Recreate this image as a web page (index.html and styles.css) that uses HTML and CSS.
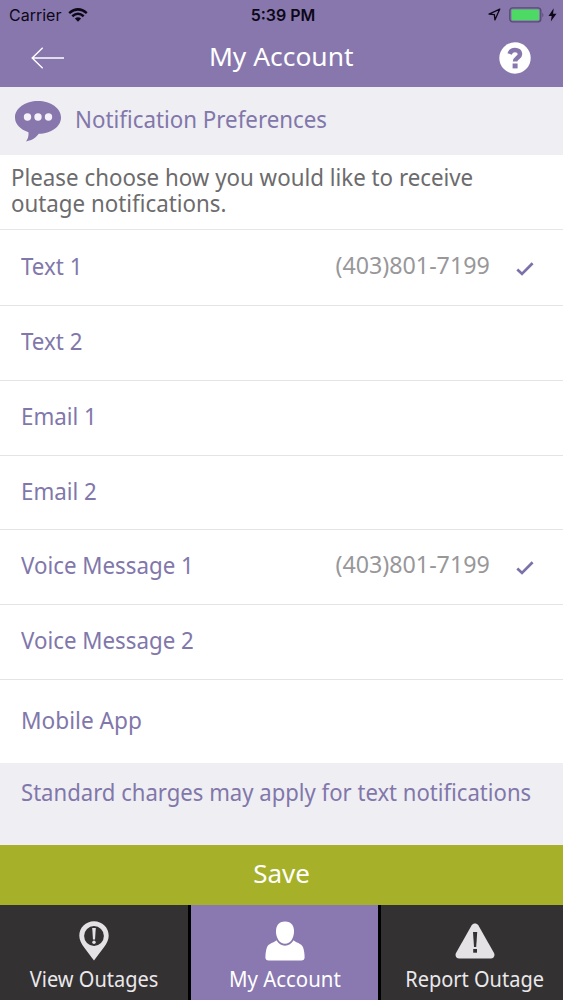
FILE: index.html
```html
<!DOCTYPE html>
<html lang="en">
<head>
<meta charset="utf-8">
<title>My Account</title>
<link rel="stylesheet" href="styles.css">
</head>
<body>
<div class="app">
  <header class="header">
    <div class="status">
      <div class="status-left">
        <span class="carrier">Carrier</span>
        <svg class="wifi" width="20" height="14" viewBox="0 0 20 14" fill="none" stroke="#0d0818" stroke-width="2.5"><path d="M1.2 5.1Q10-2.4 18.8 5.1"/><path d="M4.3 8.3Q10 3.3 15.7 8.3"/><path d="M6.9 10.5Q10 8 13.1 10.5L10 13.7z" fill="#0d0818" stroke="none"/></svg>
      </div>
      <span class="clock">5:39 PM</span>
      <div class="status-right">
        <svg width="13" height="13" viewBox="0 0 13 13" fill="none" stroke="#0d0818" stroke-width="1.3" stroke-linejoin="round"><path d="M11.8 1.1L1 6.1l5.4.5.5 5.3z"/></svg>
        <svg class="battery" width="36" height="16" viewBox="0 0 36 16"><rect x=".8" y=".9" width="31" height="14" rx="2.8" fill="none" stroke="#574b73" stroke-width="1.4"/><rect x="2.6" y="2.6" width="27.4" height="10.6" rx="1" fill="#4cd964"/><path d="M33.4 5.5q2 2.4 0 4.9z" fill="#574b73"/></svg>
        <svg width="9" height="14" viewBox="0 0 9 14"><path d="M5.7.3L.5 8h3.2l-.9 5.6L8.5 5.7H5.1z" fill="#0d0818"/></svg>
      </div>
    </div>
    <div class="nav">
      <svg width="34" height="22" viewBox="0 0 34 22" fill="none" stroke="#fff" stroke-width="1.4"><path d="M1 11h32M11.7.7L1.2 11l10.5 10.3"/></svg>
      <h1 class="title">My Account</h1>
      <svg width="32" height="32" viewBox="0 0 32 32"><circle cx="16" cy="16" r="15.7" fill="#fff"/><path d="M10.600 11.900C11.500 9.200 13.300 8 16 8c3.100 0 5 1.500 5 3.900 0 3.900-4.900 3.800-4.900 7.700" fill="none" stroke="#8777ad" stroke-width="4.600"/><path d="M13.600 21.500h5v4.900h-5z" fill="#8777ad"/></svg>
    </div>
  </header>

  <section class="section-head">
    <svg width="46" height="41" viewBox="0 0 46 41"><path d="M23 0C10.300 0 0 7.200 0 16.500c0 6.500 5.200 12 13.500 14.700.3 4-.7 6.800-2.500 9.300 6.800-1.400 10-4 12.800-7.700C36 32.600 46 25.700 46 16.500 46 7.200 35.700 0 23 0z" fill="#8777ad"/><g fill="#f5f0fa"><circle cx="12.500" cy="16" r="3.700"/><circle cx="23" cy="16" r="3.700"/><circle cx="33.500" cy="16" r="3.700"/></g></svg>
    <h2 class="heading">Notification Preferences</h2>
  </section>
  <div class="intro"><p class="intro-text">Please choose how you would like to receive<br>outage notifications.</p></div>

  <ul class="list">
    <li class="row row-first"><span class="label">Text 1</span><span class="phone">(403)801-7199</span><svg class="check" width="18" height="14" viewBox="0 0 18 14"><path d="M1.300 7.400l4.700 4.500L16.600 1.300" fill="none" stroke="#7d71aa" stroke-width="2.700"/></svg></li>
    <li class="row"><span class="label">Text 2</span></li>
    <li class="row"><span class="label">Email 1</span></li>
    <li class="row row-short"><span class="label">Email 2</span></li>
    <li class="row"><span class="label">Voice Message 1</span><span class="phone">(403)801-7199</span><svg class="check" width="18" height="14" viewBox="0 0 18 14"><path d="M1.300 7.400l4.700 4.500L16.600 1.300" fill="none" stroke="#7d71aa" stroke-width="2.700"/></svg></li>
    <li class="row"><span class="label">Voice Message 2</span></li>
    <li class="row row-last"><span class="label label-wide">Mobile App</span></li>
  </ul>

  <div class="note"><p class="note-text">Standard charges may apply for text notifications</p></div>
  <button class="save">Save</button>

  <nav class="tabs">
    <a class="tab tab-view">
      <svg width="30" height="40" viewBox="0 0 30 40"><path d="M15 .3C6.700.3.300 6.800.300 14.700.300 22.500 8 29.500 15 39.500 22 29.500 29.700 22.500 29.700 14.700 29.700 6.800 23.300.300 15 .300z" fill="#e4e2e4"/><circle cx="15" cy="15" r="9.900" fill="#333132"/><path d="M13.200 7h3.600l-.8 11.500h-2z" fill="#e4e2e4"/><circle cx="15" cy="21.300" r="1.700" fill="#e4e2e4"/></svg>
      <span class="tab-text">View Outages</span>
    </a>
    <a class="tab tab-account">
      <svg width="40" height="40" viewBox="0 0 40 40" fill="#fff"><path d="M20 .5c6.500 0 9.200 4.500 9 10.500-.2 6-3.500 11.800-9 11.800S11.200 17 11 11C10.800 5 13.500.5 20 .5z"/><path d="M11.400 19.300C13.500 22.700 16.400 24.700 20 24.700s6.500-2 8.600-5.400c1.800 2.200 8 3 9.500 7.200 1 2.900 1.500 6.600 1.500 10 0 2.100-1.200 3-3.300 3H3.700c-2.100 0-3.300-.9-3.300-3 0-3.400.5-7.100 1.500-10 1.500-4.200 7.700-5 9.500-7.200z"/></svg>
      <span class="tab-text">My Account</span>
    </a>
    <a class="tab tab-report">
      <svg width="40" height="36" viewBox="0 0 40 36"><path d="M16.700 2.200c1.500-2.300 5.100-2.300 6.600 0L39 30c1.300 2.500-.2 5.500-3.200 5.500H4.200C1.200 35.500-.3 32.500 1 30z" fill="#e4e2e4"/><path d="M18 9h4.200l-1 15h-2.200z" fill="#333132"/><path d="M18.200 26h3.800v3.700h-3.800z" fill="#333132"/></svg>
      <span class="tab-text">Report Outage</span>
    </a>
  </nav>
</div>
</body>
</html>
```
FILE: styles.css
```css
* { box-sizing: border-box; margin: 0; padding: 0; }
body {
  width: 563px;
  height: 1000px;
  overflow: hidden;
  font-family: "Noto Sans", "Open Sans", sans-serif;
  font-size: 23px;
  font-weight: 400;
  color: #8177aa;
  background: #fff;
}
svg { display: block; flex: none; }
.app { display: flex; flex-direction: column; height: 1000px; overflow: hidden; }
.header { height: 87px; background: #8777ad; }
.status {
  display: grid;
  grid-template-columns: 1fr auto 1fr;
  align-items: center;
  height: 29px;
  padding: 0 6px 0 9px;
  font: 400 16px/20px Inter, sans-serif;
  color: #0d0818;
}
.status-left, .status-right { display: flex; align-items: center; gap: 7px; }
.status-right { justify-content: flex-end; gap: 5px; }
.battery { margin-left: 3px; margin-right: -2px; }
.clock { font-weight: 600; }
.nav {
  display: grid;
  grid-template-columns: 1fr auto 1fr;
  align-items: center;
  height: 57px;
  padding: 0 32px 0 31px;
  color: #fff;
}
.nav > :last-child { justify-self: end; }
.title {
  padding-bottom: 4px;
  font-size: 26px;
  font-weight: 400;
  line-height: 36px;
  transform: scaleX(1.015);
}
.section-head {
  display: flex;
  align-items: center;
  gap: 14px;
  height: 68px;
  padding-left: 15px;
  background: #efeef3;
}
/* Labels are set slightly condensed */
.heading, .intro-text, .label, .note-text { transform-origin: left; transform: scaleX(.97); }
.heading {
  padding-bottom: 4px;
  font-size: 23px;
  font-weight: 400;
  line-height: 32px;
}
.intro {
  height: 75px;
  padding: 9px 12px 0 11px;
  border-bottom: 1px solid #e6e5e8;
  line-height: 26px;
  color: #6c6b6d;
  white-space: nowrap;
}
.list { list-style: none; }
.row {
  display: flex;
  align-items: center;
  height: 75px;
  padding: 0 29px 0 21px;
  border-bottom: 1px solid #e4e3e5;
}
.row-first { height: 76px; }
.row-short { height: 74px; }
.row-last { height: 83px; border: 0; }
.label { padding-bottom: 4px; }
.label-wide { transform: scaleX(.985); }
.phone {
  margin-left: auto;
  padding-bottom: 6px;
  color: #98979a;
  transform-origin: right;
  transform: scaleX(1.01);
}
.check { margin-left: 26px; margin-top: 2px; }
.note {
  height: 82px;
  padding: 13px 21px 0;
  background: #efeef3;
  line-height: 32px;
  white-space: nowrap;
}
.note-text { transform: scaleX(.961); }
.save {
  height: 60px;
  padding-bottom: 4px;
  border: 0;
  background: #a6b129;
  color: #fff;
  font: inherit;
  font-size: 26px;
}
.tabs {
  display: grid;
  grid-template-columns: 188px 187px 187px;
  gap: 3px;
  height: 95px;
  background: #000;
}
.tab {
  display: flex;
  flex-direction: column;
  align-items: center;
  justify-content: flex-end;
  gap: 3px;
  padding-bottom: 7px;
  background: #333132;
  color: #eae8ea;
  font-size: 21.5px;
  line-height: 29px;
  white-space: nowrap;
}
.tab-text { transform: scaleX(.93); }
.tab-account { background: #8a78b0; color: #fff; }
.tab-account .tab-text { transform: scaleX(.95); }
.tab-report { gap: 5px; }
```
